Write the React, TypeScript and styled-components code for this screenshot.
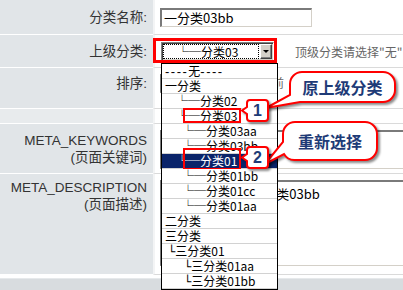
import React from "react";
import styled, { createGlobalStyle } from "styled-components";

const CJK = `"Noto Sans CJK SC", sans-serif`;
const UI = `"Liberation Sans", "Noto Sans CJK SC", sans-serif`;
const NAVY = "#1e3b77";

const Global = createGlobalStyle`
  html, body { margin: 0; padding: 0; background: #fff; }
  body { width: 403px; height: 290px; overflow: hidden; }
`;

const Page = styled.div`
  position: relative;
  width: 403px;
  height: 290px;
  overflow: hidden;
  background: #fff;
  font-family: ${UI};
  display: flex;
  flex-direction: column;
`;

const Row = styled.div<{ $h: number }>`
  display: flex;
  flex: 0 0 ${(p) => p.$h}px;
  height: ${(p) => p.$h}px;
`;

const Label = styled.div<{ $top?: number; $tone?: string }>`
  flex: 0 0 153px;
  box-sizing: border-box;
  background: ${(p) => p.$tone ?? "#e1e5e8"};
  border-bottom: 1px solid #fff;
  padding-right: 6px;
  padding-top: ${(p) => p.$top ?? 0}px;
  display: flex;
  flex-direction: column;
  align-items: flex-end;
  justify-content: ${(p) => (p.$top !== undefined ? "flex-start" : "center")};
  font-size: 13.5px;
  line-height: 17px;
  color: #333;
  white-space: nowrap;
`;

const LabelLine = styled.span`
  display: block;
`;

const Value = styled.div<{ $top?: number }>`
  flex: 1 1 auto;
  min-width: 0;
  box-sizing: border-box;
  border-left: 2px solid #f3f4f5;
  border-bottom: 1px solid #dadada;
  padding-left: 5px;
  padding-top: ${(p) => p.$top ?? 0}px;
  display: flex;
  align-items: ${(p) => (p.$top !== undefined ? "flex-start" : "center")};
`;

const Field = styled.div<{ $w: number }>`
  flex: 0 0 ${(p) => p.$w}px;
  height: 19px;
  box-sizing: border-box;
  border-top: 2px solid #7a7a7a;
  border-left: 2px solid #7a7a7a;
  border-right: 1px solid #d4d0c8;
  border-bottom: 1px solid #d4d0c8;
  padding: 0 2px;
  font-family: ${CJK};
  font-size: 13px;
  line-height: 16px;
  color: #000;
  white-space: nowrap;
`;

const Hint = styled.span<{ $gap: number }>`
  flex: 0 0 auto;
  margin-left: ${(p) => p.$gap}px;
  font-family: ${CJK};
  font-size: 12px;
  color: #666;
  white-space: nowrap;
`;

const SelectWrap = styled.div`
  position: relative;
  flex: 0 0 auto;
  margin-left: 1px;
`;

const SelectBox = styled.div`
  width: 113px;
  height: 19px;
  box-sizing: border-box;
  border-top: 1px solid #808080;
  border-left: 1px solid #808080;
  border-right: 1px solid #fff;
  border-bottom: 1px solid #fff;
  box-shadow: inset 1px 1px 0 #404040, inset -1px -1px 0 #d4d0c8;
  background: #fff;
  padding: 1px;
  display: flex;
  gap: 1px;
`;

const FocusText = styled.div`
  flex: 1 1 auto;
  box-sizing: border-box;
  border: 1px dotted #000;
  padding-left: 13px;
  font-family: ${CJK};
  font-size: 12px;
  line-height: 13px;
  white-space: nowrap;
  overflow: hidden;
`;

const DropButton = styled.div`
  flex: 0 0 12px;
  box-sizing: border-box;
  background: #d4d0c8;
  border-top: 1px solid #fff;
  border-left: 1px solid #fff;
  border-right: 1px solid #404040;
  border-bottom: 1px solid #404040;
  box-shadow: inset -1px -1px 0 #808080;
  display: flex;
  align-items: center;
  justify-content: center;
  &::after {
    content: "";
    border-left: 3px solid transparent;
    border-right: 3px solid transparent;
    border-top: 3px solid #000;
  }
`;

const FocusMark = styled.div`
  position: absolute;
  left: -8px;
  top: -4px;
  width: 124px;
  height: 25px;
  box-sizing: border-box;
  border: 3px solid #ff0000;
  z-index: 3;
`;

const List = styled.ul`
  position: absolute;
  left: 0;
  top: 21px;
  width: 117px;
  margin: 0;
  padding: 0;
  list-style: none;
  box-sizing: border-box;
  border: 1px solid #000;
  background: #fff;
  z-index: 2;
  font-family: ${CJK};
  font-size: 12px;
`;

const Item = styled.li<{ $indent: number; $selected?: boolean }>`
  position: relative;
  height: 15px;
  box-sizing: border-box;
  border-bottom: 1px solid #d2d2d2;
  padding-left: ${(p) => p.$indent}px;
  line-height: 14px;
  white-space: nowrap;
  background: ${(p) => (p.$selected ? "#0a246a" : "#fff")};
  color: ${(p) => (p.$selected ? "#fff" : "#000")};
`;

const Dashes = styled.span`
  font-family: "Liberation Sans", sans-serif;
  font-size: 13px;
  letter-spacing: 1.5px;
`;

const Narrow = styled.span`
  font-family: "DejaVu Sans Mono", monospace;
`;

const ItemMark = styled.span<{ $top: number; $h: number }>`
  position: absolute;
  left: 21px;
  top: ${(p) => p.$top}px;
  width: 58px;
  height: ${(p) => p.$h}px;
  box-sizing: border-box;
  border: 2px solid #ff0000;
`;

const TextBox = styled.div<{ $h: number }>`
  flex: 0 0 260px;
  height: ${(p) => p.$h}px;
  box-sizing: border-box;
  border-top: 2px solid #7a7a7a;
  border-left: 2px solid #7a7a7a;
  border-right: 1px solid #d4d0c8;
  border-bottom: 1px solid #d4d0c8;
  padding: 4px 3px;
  font-family: ${CJK};
  font-size: 13px;
  line-height: 16px;
  color: #000;
  white-space: nowrap;
`;

const Footer = styled.div`
  flex: 1 1 auto;
  margin-top: 3px;
  background: #d8dcdf;
  border-top: 1px solid #e6e9eb;
`;

const Overlay = styled.div<{ $x: number; $y: number; $w: number; $h: number; $z: number }>`
  position: absolute;
  left: ${(p) => p.$x}px;
  top: ${(p) => p.$y}px;
  width: ${(p) => p.$w}px;
  height: ${(p) => p.$h}px;
  z-index: ${(p) => p.$z};
  pointer-events: none;
`;

const Shape = styled.svg`
  position: absolute;
  left: 0;
  top: 0;
  overflow: visible;
  filter: drop-shadow(2px 2px 1px rgba(0, 0, 0, 0.45));
`;

const CalloutText = styled.span<{ $x: number; $y: number; $w: number; $h: number }>`
  position: absolute;
  left: ${(p) => p.$x}px;
  top: ${(p) => p.$y}px;
  width: ${(p) => p.$w}px;
  height: ${(p) => p.$h}px;
  display: flex;
  align-items: center;
  justify-content: center;
  font-family: ${CJK};
  font-weight: 700;
  font-size: 16px;
  color: ${NAVY};
  white-space: nowrap;
`;

const BadgeNum = styled.span`
  position: absolute;
  left: 6px;
  top: 1px;
  width: 21px;
  height: 21px;
  display: flex;
  align-items: center;
  justify-content: center;
  font-family: "Liberation Sans", sans-serif;
  font-size: 16px;
  font-weight: 700;
  color: ${NAVY};
`;

type Opt = {
  text: React.ReactNode;
  indent: number;
  selected?: boolean;
  mark?: { top: number; h: number };
};

const options: Opt[] = [
  { text: <><Dashes>----</Dashes>无<Dashes>----</Dashes></>, indent: 3 },
  { text: "一分类", indent: 3 },
  { text: "└─分类02", indent: 14 },
  { text: "└─分类03", indent: 14, mark: { top: -1, h: 15 } },
  { text: "└─分类03aa", indent: 20 },
  { text: "└─分类03bb", indent: 20 },
  { text: "└─分类01", indent: 14, selected: true, mark: { top: -6, h: 22 } },
  { text: "└─分类01bb", indent: 20 },
  { text: "└─分类01cc", indent: 20 },
  { text: "└─分类01aa", indent: 20 },
  { text: "二分类", indent: 3 },
  { text: "三分类", indent: 3 },
  { text: <><Narrow>└</Narrow>三分类01</>, indent: 6 },
  { text: <><Narrow>└</Narrow>三分类01aa</>, indent: 22 },
  { text: <><Narrow>└</Narrow>三分类01bb</>, indent: 22 },
];

function Badge({ x, y, n }: { x: number; y: number; n: string }) {
  return (
    <Overlay $x={x} $y={y} $w={30} $h={24} $z={5}>
      <Shape width="30" height="24" viewBox="0 0 30 24">
        <path
          d="M 9 1 H 24 A 3 3 0 0 1 27 4 V 19 A 3 3 0 0 1 24 22 H 9 A 3 3 0 0 1 6 19 V 15 L 1 11.5 L 6 8 V 4 A 3 3 0 0 1 9 1 Z"
          fill="#fff"
          stroke="#ff0000"
          strokeWidth="2"
        />
      </Shape>
      <BadgeNum>{n}</BadgeNum>
    </Overlay>
  );
}

export default function App() {
  return (
    <>
      <Global />
      <Page>
        <Row $h={35}>
          <Label>分类名称:</Label>
          <Value>
            <Field $w={152}>一分类03bb</Field>
          </Value>
        </Row>
        <Row $h={33}>
          <Label>上级分类:</Label>
          <Value>
            <SelectWrap>
              <SelectBox>
                <FocusText>└─分类03</FocusText>
                <DropButton />
              </SelectBox>
              <FocusMark />
              <List>
                {options.map((o, i) => (
                  <Item key={i} $indent={o.indent} $selected={o.selected}>
                    {o.text}
                    {o.mark && <ItemMark $top={o.mark.top} $h={o.mark.h} />}
                  </Item>
                ))}
              </List>
            </SelectWrap>
            <Hint $gap={21}>{'顶级分类请选择"无"'}</Hint>
          </Value>
        </Row>
        <Row $h={41}>
          <Label $top={7}>排序:</Label>
          <Value $top={6}>
            <Field $w={34}>0</Field>
            <Hint $gap={6}>数字越小越靠前</Hint>
          </Value>
        </Row>
        <Row $h={15}>
          <Label $tone="#e8ebed" />
          <Value />
        </Row>
        <Row $h={50}>
          <Label>
            <LabelLine>META_KEYWORDS</LabelLine>
            <LabelLine>(页面关键词)</LabelLine>
          </Label>
          <Value $top={6}>
            <TextBox $h={39}>一分类03bb</TextBox>
          </Value>
        </Row>
        <Row $h={101}>
          <Label $top={5}>
            <LabelLine>META_DESCRIPTION</LabelLine>
            <LabelLine>(页面描述)</LabelLine>
          </Label>
          <Value $top={6}>
            <TextBox $h={86}>一分类,二分类,一分类03bb</TextBox>
          </Value>
        </Row>
        <Footer />

        <Overlay $x={260} $y={66} $w={142} $h={46} $z={4}>
          <Shape width="142" height="46" viewBox="0 0 142 46">
            <path
              d="M 42 6 H 123 A 12 12 0 0 1 135 18 V 24 A 12 12 0 0 1 123 36 H 40 L 6 42 L 30 29 V 18 A 12 12 0 0 1 42 6 Z"
              fill="#fff"
              stroke="#ff0000"
              strokeWidth="2"
            />
          </Shape>
          <CalloutText $x={30} $y={6} $w={105} $h={30}>原上级分类</CalloutText>
        </Overlay>

        <Overlay $x={258} $y={117} $w={125} $h={52} $z={4}>
          <Shape width="125" height="52" viewBox="0 0 125 52">
            <path
              d="M 37 5 H 107 A 12 12 0 0 1 119 17 V 31 A 12 12 0 0 1 107 43 H 37 A 12 12 0 0 1 26 37 L 7 47 L 25 25 V 17 A 12 12 0 0 1 37 5 Z"
              fill="#fff"
              stroke="#ff0000"
              strokeWidth="2"
            />
          </Shape>
          <CalloutText $x={25} $y={5} $w={94} $h={38}>重新选择</CalloutText>
        </Overlay>

        <Badge x={241} y={99} n="1" />
        <Badge x={241} y={146} n="2" />
      </Page>
    </>
  );
}
